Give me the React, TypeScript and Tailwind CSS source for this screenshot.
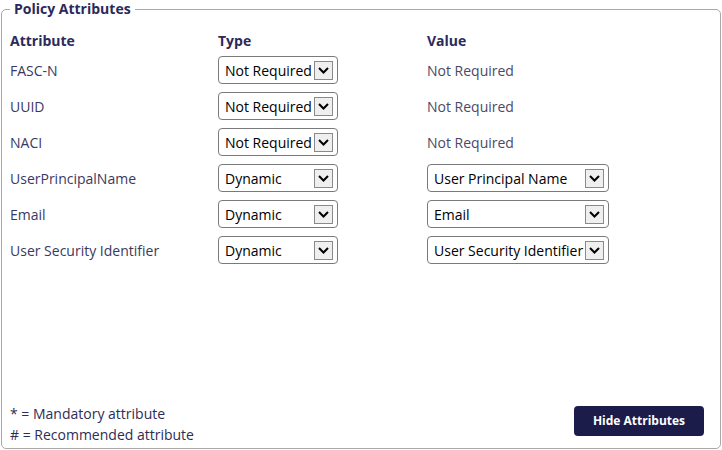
import { useState } from 'react'

type Row = {
  name: string
  type: string
  value: string | null
}

const rows: Row[] = [
  { name: 'FASC-N', type: 'Not Required', value: null },
  { name: 'UUID', type: 'Not Required', value: null },
  { name: 'NACI', type: 'Not Required', value: null },
  { name: 'UserPrincipalName', type: 'Dynamic', value: 'User Principal Name' },
  { name: 'Email', type: 'Dynamic', value: 'Email' },
  { name: 'User Security Identifier', type: 'Dynamic', value: 'User Security Identifier' },
]

function Chevron() {
  return (
    <svg width="11" height="7" viewBox="0 0 11 7" fill="none">
      <path d="M1 1l4.5 4.5L10 1" stroke="#000" strokeWidth="2" />
    </svg>
  )
}

function FakeSelect({ label, wide }: { label: string; wide?: boolean }) {
  return (
    <div
      className={
        wide
          ? 'flex h-[28px] w-[182px] items-center justify-between rounded-[4px] border border-[#7a7a7a] bg-white pl-[6px] pr-[4px]'
          : 'flex h-[28px] w-[120px] items-center justify-between rounded-[4px] border border-[#7a7a7a] bg-white pl-[6px] pr-[4px]'
      }
    >
      <span className="whitespace-nowrap text-[14px] text-black">{label}</span>
      <span className="flex h-[19px] w-[19px] shrink-0 items-center justify-center border border-[#8a8a8a] bg-[#efefef]">
        <Chevron />
      </span>
    </div>
  )
}

export default function App() {
  const [shown, setShown] = useState(true)

  return (
    <div className="h-[450px] w-[722px] bg-white px-px pt-px font-['Open_Sans',sans-serif] text-[14px]">
      <fieldset className="h-[448px] rounded-[5px] border border-[#a9a9a9] px-[8px]">
        <legend className="px-1 text-[14px] font-bold leading-[16px] text-[#2b2a5a]">
          Policy Attributes
        </legend>

        <div className="flex h-[431px] flex-col">
          {/* Header */}
          <div className="mt-[13px] grid grid-cols-[208px_209px_1fr] font-bold text-[#2b2a5a]">
            <span>Attribute</span>
            <span>Type</span>
            <span>Value</span>
          </div>

          {/* Attribute rows */}
          {shown && (
            <div className="mt-[5px] flex flex-col gap-[8px]">
              {rows.map((row) => (
                <div key={row.name} className="grid grid-cols-[208px_209px_1fr] items-center">
                  <span className="text-[#3a3960]">{row.name}</span>
                  <FakeSelect label={row.type} />
                  {row.value ? (
                    <FakeSelect label={row.value} wide />
                  ) : (
                    <span className="text-[#4a4966]">Not Required</span>
                  )}
                </div>
              ))}
            </div>
          )}

          <div className="flex-1" />

          {/* Footer */}
          <div className="flex items-end justify-between pb-[3px] pr-[8px]">
            <div className="flex flex-col text-[14px] leading-[21px] text-[#2e2d55]">
              <span>* = Mandatory attribute</span>
              <span># = Recommended attribute</span>
            </div>
            <button
              onClick={() => setShown(!shown)}
              className="mb-[9px] h-[30px] w-[130px] rounded-[4px] bg-[#1c1c4b] text-[12px] font-bold text-white"
            >
              Hide Attributes
            </button>
          </div>
        </div>
      </fieldset>
    </div>
  )
}
